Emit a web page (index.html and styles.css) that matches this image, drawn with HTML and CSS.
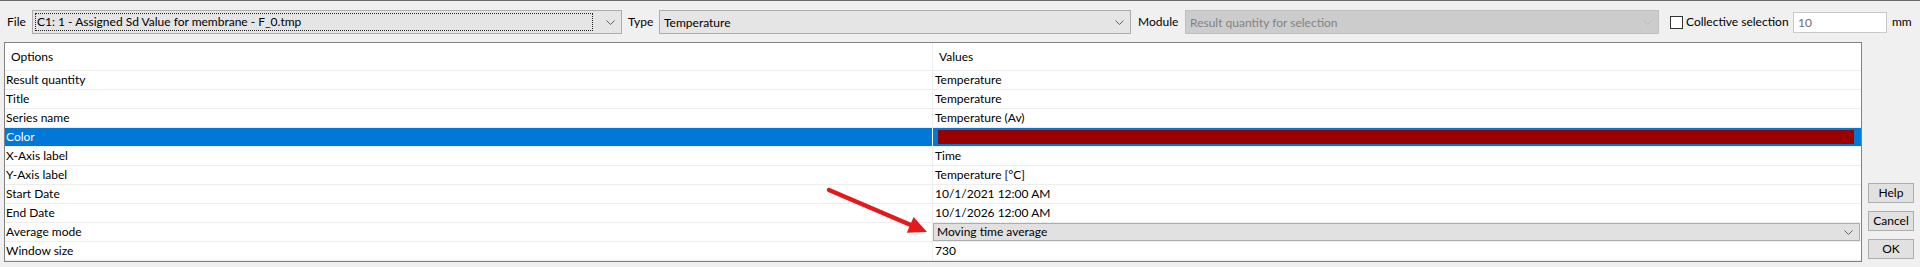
FILE: index.html
```html
<!DOCTYPE html>
<html>
<head>
<meta charset="utf-8">
<link rel="stylesheet" href="styles.css">
</head>
<body>
<div class="window">
  <div class="toolbar">
    <span class="lbl">File</span>
    <div class="combo">
      <span class="focus">C1: 1 - Assigned Sd Value for membrane - F_0.tmp</span>
      <svg class="chev" width="9" height="5" viewBox="0 0 9 5"><path d="M0.5 0.5 L4.5 4.5 L8.5 0.5" fill="none" stroke="#606060" stroke-width="1"/></svg>
    </div>
    <span class="lbl pad6">Type</span>
    <div class="combo">
      <span class="val">Temperature</span>
      <svg class="chev" width="9" height="5" viewBox="0 0 9 5"><path d="M0.5 0.5 L4.5 4.5 L8.5 0.5" fill="none" stroke="#606060" stroke-width="1"/></svg>
    </div>
    <span class="lbl pad7">Module</span>
    <div class="combo disabled">
      <span class="val">Result quantity for selection</span>
      <svg class="chev" width="9" height="5" viewBox="0 0 9 5"><path d="M0.5 0.5 L4.5 4.5 L8.5 0.5" fill="none" stroke="#bdbdbd" stroke-width="1"/></svg>
    </div>
    <span class="checkcell"><span class="check"></span></span>
    <span class="lbl pad3">Collective selection</span>
    <div class="input">10</div>
    <span class="lbl pad5">mm</span>
  </div>

  <div class="main">
    <div class="grid">
      <div class="cell hd first">Options</div><div class="cell hd">Values</div>
      <div class="cell first">Result quantity</div><div class="cell val">Temperature</div>
      <div class="cell first">Title</div><div class="cell val">Temperature</div>
      <div class="cell first">Series name</div><div class="cell val">Temperature (Av)</div>
      <div class="cell first sel">Color</div><div class="cell colorcell"><div class="colorbar"></div></div>
      <div class="cell first">X-Axis label</div><div class="cell val">Time</div>
      <div class="cell first">Y-Axis label</div><div class="cell val">Temperature [°C]</div>
      <div class="cell first">Start Date</div><div class="cell val">10/1/2021 12:00 AM</div>
      <div class="cell first">End Date</div><div class="cell val">10/1/2026 12:00 AM</div>
      <div class="cell first">Average mode</div>
      <div class="cell combocell"><div class="incombo"><span>Moving time average</span><svg class="chev" width="9" height="5" viewBox="0 0 9 5"><path d="M0.5 0.5 L4.5 4.5 L8.5 0.5" fill="none" stroke="#606060" stroke-width="1"/></svg></div></div>
      <div class="cell first">Window size</div><div class="cell val">730</div>
    </div>
    <div class="buttons">
      <div class="btn">Help</div>
      <div class="btn">Cancel</div>
      <div class="btn">OK</div>
    </div>
  </div>

  <svg class="annot" width="1920" height="267" viewBox="0 0 1920 267">
    <line x1="829" y1="190" x2="912" y2="225.5" stroke="#e3191b" stroke-width="4.5" stroke-linecap="round"/>
    <polygon points="927,232 913.6,217 906.8,232.8" fill="#e3191b"/>
  </svg>
</div>
</body>
</html>
```

FILE: styles.css
```css
html, body {
  margin: 0;
  padding: 0;
}
body {
  width: 1920px;
  height: 267px;
  overflow: hidden;
  background: #f0f0f0;
  font-family: Lato, "Liberation Sans", sans-serif;
  font-size: 12px;
  color: #000;
}
.window {
  position: relative;
  height: 266px;
  border-top: 1px solid #6a6a6a;
}

/* toolbar */
.toolbar {
  display: grid;
  grid-template-columns: 25px 590px 37px 472px 54px 474px 24px 110px 94px 1fr;
  align-items: center;
  height: 41px;
  padding-left: 7px;
}
.lbl {
  white-space: nowrap;
}
.pad3 { padding-left: 3px; }
.pad5 { padding-left: 5px; }
.pad6 { padding-left: 6px; }
.pad7 { padding-left: 7px; }

.combo {
  box-sizing: border-box;
  height: 24px;
  margin-top: 1px;
  border: 1px solid #adadad;
  background: #e5e5e5;
  display: flex;
  align-items: center;
  padding: 0 6px 0 2px;
  position: relative;
}
.combo .focus {
  flex: 1;
  box-sizing: border-box;
  height: 18px;
  line-height: 16px;
  border: 1px dotted #222;
  padding-left: 1px;
  margin-right: 13px;
  white-space: nowrap;
}
.combo .val {
  flex: 1;
  padding-left: 2px;
  white-space: nowrap;
}
.combo.disabled {
  background: #cccccc;
  border-color: #bfbfbf;
  color: #838383;
}
.chev {
  display: block;
  flex: none;
}
.checkcell {
  display: flex;
  justify-content: flex-end;
}
.check {
  box-sizing: border-box;
  width: 13px;
  height: 13px;
  border: 1px solid #333;
  background: #fff;
  margin-top: 1px;
}
.input {
  box-sizing: border-box;
  height: 21px;
  margin-top: 1px;
  border: 1px solid #c9c9c9;
  background: #fff;
  color: #6d6d6d;
  padding-left: 4px;
  line-height: 19px;
}

/* main */
.main {
  display: flex;
  margin-left: 4px;
  height: 220px;
}
.grid {
  box-sizing: border-box;
  width: 1858px;
  height: 220px;
  border: 1px solid #828282;
  background: #fff;
  display: grid;
  grid-template-columns: 928px 1fr;
  grid-template-rows: 28px repeat(10, 19px);
  overflow: hidden;
}
.cell {
  box-sizing: border-box;
  border-bottom: 1px solid #ededed;
  line-height: 18px;
  white-space: nowrap;
  overflow: hidden;
}
.cell.first {
  border-right: 1px solid #ededed;
  padding-left: 1px;
}
.cell.val {
  padding-left: 2px;
}
.cell.hd {
  line-height: 27px;
  padding-left: 6px;
}
.cell.hd.first {
  padding-left: 6px;
}
.cell.sel {
  background: #0078d7;
  color: #fff;
  border-right-color: #fff;
}
.colorcell {
  background: #0078d7;
  padding: 2px 7px 2px 5px;
}
.colorbar {
  height: 14px;
  background: #990000;
}
.combocell {
  padding-right: 1px;
}
.incombo {
  box-sizing: border-box;
  height: 18px;
  border: 1px solid #adadad;
  background: #e1e1e1;
  display: flex;
  align-items: center;
  padding: 0 6px 0 3px;
}
.incombo span {
  flex: 1;
  line-height: 16px;
}

.buttons {
  margin-left: 6px;
  width: 46px;
  display: flex;
  flex-direction: column;
  justify-content: flex-end;
  gap: 8px;
  padding-bottom: 3px;
}
.btn {
  box-sizing: border-box;
  height: 20px;
  border: 1px solid #adadad;
  background: #e1e1e1;
  text-align: center;
  line-height: 18px;
}

.annot {
  position: absolute;
  left: 0;
  top: -1px;
  pointer-events: none;
}
```
